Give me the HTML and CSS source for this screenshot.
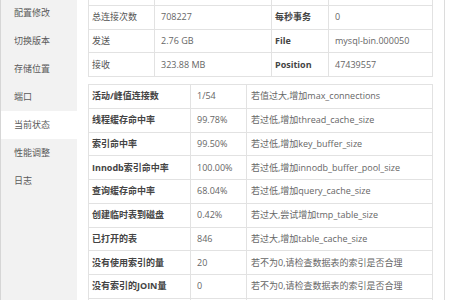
FILE: index.html
```html
<!DOCTYPE html>
<html lang="zh-CN">
<head>
<meta charset="utf-8">
<title>MySQL 当前状态</title>
<link rel="stylesheet" href="styles.css">
</head>
<body>
<div class="panel">
  <aside class="side">
    <ul class="menu">
      <li class="item">配置修改</li>
      <li class="item">切换版本</li>
      <li class="item">存储位置</li>
      <li class="item">端口</li>
      <li class="item active">当前状态</li>
      <li class="item">性能调整</li>
      <li class="item">日志</li>
    </ul>
  </aside>
  <main class="main">
    <table class="grid t1">
      <colgroup>
        <col class="c1"><col class="c2"><col class="c3"><col class="c4">
      </colgroup>
      <tr class="clip"><td class="lab"></td><td></td><td class="lab b"></td><td></td></tr>
      <tr><td class="lab">总连接次数</td><td>708227</td><td class="lab b">每秒事务</td><td>0</td></tr>
      <tr><td class="lab">发送</td><td>2.76 GB</td><td class="lab b">File</td><td>mysql-bin.000050</td></tr>
      <tr><td class="lab">接收</td><td>323.88 MB</td><td class="lab b">Position</td><td>47439557</td></tr>
    </table>
    <table class="grid t2">
      <colgroup>
        <col class="d1"><col class="d2"><col class="d3">
      </colgroup>
      <tr><td class="lab b">活动/峰值连接数</td><td>1/54</td><td class="note">若值过大,增加max_connections</td></tr>
      <tr><td class="lab b">线程缓存命中率</td><td>99.78%</td><td class="note">若过低,增加thread_cache_size</td></tr>
      <tr><td class="lab b">索引命中率</td><td>99.50%</td><td class="note">若过低,增加key_buffer_size</td></tr>
      <tr><td class="lab b">Innodb索引命中率</td><td>100.00%</td><td class="note">若过低,增加innodb_buffer_pool_size</td></tr>
      <tr><td class="lab b">查询缓存命中率</td><td>68.04%</td><td class="note">若过低,增加query_cache_size</td></tr>
      <tr><td class="lab b">创建临时表到磁盘</td><td>0.42%</td><td class="note">若过大,尝试增加tmp_table_size</td></tr>
      <tr><td class="lab b">已打开的表</td><td>846</td><td class="note">若过大,增加table_cache_size</td></tr>
      <tr><td class="lab b">没有使用索引的量</td><td>20</td><td class="note">若不为0,请检查数据表的索引是否合理</td></tr>
      <tr><td class="lab b">没有索引的JOIN量</td><td>0</td><td class="note">若不为0,请检查数据表的索引是否合理</td></tr>
      <tr class="clip"><td class="lab b"></td><td></td><td class="note"></td></tr>
    </table>
  </main>
</div>
</body>
</html>
```
FILE: styles.css
```css
html, body {
  margin: 0;
  padding: 0;
  background: #ffffff;
}
body {
  font-family: "Open Sans", "Noto Sans CJK SC", sans-serif;
  font-size: 9px;
  color: #666666;
}
.panel {
  display: flex;
  width: 445px;
  height: 300px;
  overflow: hidden;
  border-left: 1px solid #d6d6d6;
  border-right: 1px solid #dcdcdc;
  box-sizing: border-box;
  background: #ffffff;
}
.side {
  width: 76px;
  flex: none;
  background: #f2f2f2;
}
.menu {
  list-style: none;
  margin: -1px 0 0 0;
  padding: 0;
}
.item {
  height: 28px;
  line-height: 28px;
  padding-left: 13px;
  font-size: 9px;
  color: #5a5a5a;
  font-family: "Noto Sans CJK SC", sans-serif;
}
.item.active {
  background: #ffffff;
}
.main {
  flex: 1;
  padding: 0 12px 0 11px;
  overflow: hidden;
}
.grid {
  border-collapse: collapse;
  table-layout: fixed;
  width: 344px;
}
.grid td {
  border: 1px solid #e2e2e2;
  height: 23.75px;
  padding: 0 0 0 6px;
  box-sizing: border-box;
  white-space: nowrap;
  overflow: hidden;
  line-height: 14px;
}
.grid td.lab {
  padding-left: 3px;
  color: #555555;
}
.grid td.b {
  font-weight: bold;
  color: #444444;
}
.grid td.note {
  padding-left: 4px;
}
.t1 {
  margin-top: -19px;
}
.t1 .c1 { width: 66px; }
.t1 .c2 { width: 117px; }
.t1 .c3 { width: 57px; }
.t1 .c4 { width: 104px; }
.t2 {
  margin-top: 7px;
}
.t2 .d1 { width: 102px; }
.t2 .d2 { width: 56px; }
.t2 .d3 { width: 186px; }
```
